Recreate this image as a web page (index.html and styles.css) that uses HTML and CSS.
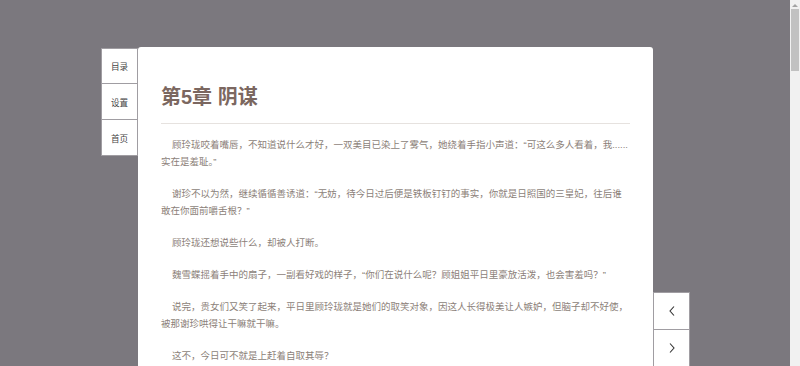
FILE: index.html
```html
<!DOCTYPE html>
<html lang="zh-CN">

<head>
  <meta charset="UTF-8">
  <meta name="viewport" content="width=device-width, initial-scale=1.0">
  <title>第5章 阴谋</title>
  <link rel="stylesheet" href="styles.css">
</head>

<body>
  <div class="reader">
    <nav class="side-menu">
      <a href="#" class="side-menu-item">目录</a>
      <a href="#" class="side-menu-item">设置</a>
      <a href="#" class="side-menu-item">首页</a>
    </nav>
    <article class="chapter">
      <h1 class="chapter-title">第5章 阴谋</h1>
      <div class="chapter-content">
        <p>顾玲珑咬着嘴唇，不知道说什么才好，一双美目已染上了雾气，她绕着手指小声道：“可这么多人看着，我......实在是羞耻。”</p>
        <p>谢珍不以为然，继续循循善诱道：“无妨，待今日过后便是铁板钉钉的事实，你就是日照国的三皇妃，往后谁敢在你面前嚼舌根？”</p>
        <p>顾玲珑还想说些什么，却被人打断。</p>
        <p>魏雪蝶摇着手中的扇子，一副看好戏的样子，“你们在说什么呢？顾姐姐平日里豪放活泼，也会害羞吗？”</p>
        <p>说完，贵女们又笑了起来，平日里顾玲珑就是她们的取笑对象，因这人长得极美让人嫉妒，但脑子却不好使，被那谢珍哄得让干嘛就干嘛。</p>
        <p>这不，今日可不就是上赶着自取其辱？</p>
        <p>亭子里的笑声一阵高过一阵，顾玲珑的脸色也越来越白，她攥紧了衣袖，终究还是没有说出话来。</p>
        <p>谢珍见状，眼底闪过一丝得意，面上却仍是一副温柔体贴的模样，轻轻拍了拍她的手背。</p>
        <p>“玲珑妹妹莫怕，有姐姐在呢，三皇子待会儿便会路过此处，你只管把那香囊递过去便是。”</p>
        <p>顾玲珑低着头，半晌才轻轻“嗯”了一声。</p>
        <p>远处的回廊上，几个人影缓缓走来，为首的男子一袭月白长袍，面如冠玉，正是三皇子。</p>
        <p>贵女们纷纷整理衣裙，一个个端庄娴静，仿佛方才的嬉笑从未发生过。</p>
        <p>谢珍推了推顾玲珑，低声催促道：“快去呀，机会可就这一次。”</p>
        <p>顾玲珑握着香囊的手微微颤抖，她深吸一口气，终于站起身来。</p>
        <p>可就在她迈出第一步的时候，脚下不知被什么绊了一下，整个人便朝着亭外的池塘跌了过去。</p>
        <p>“扑通”一声，水花四溅。</p>
        <p>亭子里顿时乱作一团，有人惊叫，有人掩嘴偷笑，却没有一个人上前去拉她一把。</p>
        <p>冰冷的池水瞬间没过头顶，顾玲珑拼命挣扎，意识却一点一点模糊下去。</p>
        <p>恍惚之间，她似乎看见谢珍站在池边，嘴角噙着一抹冷笑。</p>
        <p>原来，这一切都是早就设计好的。</p>
      </div>
    </article>
  </div>
  <nav class="page-nav">
    <a href="#" class="page-nav-item" title="上一章">
      <svg width="8" height="12" viewBox="0 0 8 12"><path d="M6 1.5L2 6l4 4.5" fill="none" stroke="#333" stroke-width="1.1"/></svg>
    </a>
    <a href="#" class="page-nav-item" title="下一章">
      <svg width="8" height="12" viewBox="0 0 8 12"><path d="M2 1.5L6 6l-4 4.5" fill="none" stroke="#333" stroke-width="1.1"/></svg>
    </a>
  </nav>
  <!-- 仿滚动条 -->
  <div class="scroll-track" aria-hidden="true">
    <div class="scroll-arrow"></div>
    <div class="scroll-thumb"></div>
  </div>
</body>

</html>
```

FILE: styles.css
```css
html {
  box-sizing: border-box;
  font-family: "Liberation Sans", "Noto Sans CJK SC", sans-serif;
  font-size: 9.5px;
}

*,
*::before,
*::after {
  box-sizing: border-box;
}

body {
  margin: 0;
  background-color: #7b787e;
}

a {
  text-decoration: none;
  color: #333;
}

.reader {
  display: flex;
  align-items: flex-start;
  margin: 47px 0 0 101px;
}

.side-menu {
  display: flex;
  flex-direction: column;
  width: 37px;
  padding-top: 1px;
}

.side-menu-item {
  display: flex;
  justify-content: center;
  align-items: center;
  height: 36px;
  background-color: #fff;
  border: 1px solid #a09da2;
  border-top: none;
  font-size: 8.6px;
  color: #444;
}

.side-menu-item:first-child {
  border-top: 1px solid #a09da2;
}

.chapter {
  width: 515px;
  min-height: 1990px;
  background-color: #fff;
  border-radius: 3px;
  padding: 36px 23px 40px;
}

.chapter-title {
  margin: 0;
  padding-bottom: 12px;
  font-size: 20px;
  font-weight: bold;
  line-height: 28px;
  color: #7b6760;
  border-bottom: 1px solid #e6e2df;
}

.chapter-content {
  padding-top: 12px;
}

.chapter-content p {
  margin: 0 0 15px;
  line-height: 17px;
  text-indent: 11px;
  color: #8c7f79;
}

.page-nav {
  position: fixed;
  left: 653px;
  bottom: 0;
  display: flex;
  flex-direction: column;
}

.page-nav-item {
  display: flex;
  justify-content: center;
  align-items: center;
  width: 37px;
  height: 37px;
  background-color: #fff;
  border: 1px solid #a09da2;
  border-bottom: none;
}

.scroll-track {
  position: fixed;
  top: 0;
  right: 0;
  width: 10px;
  height: 100%;
  background-color: #f1f1f1;
  padding: 0 1px;
}

.scroll-arrow {
  width: 0;
  height: 0;
  margin: 4px auto 2px;
  border-left: 3px solid transparent;
  border-right: 3px solid transparent;
  border-bottom: 3px solid #a3a3a3;
}

.scroll-thumb {
  height: 62px;
  background-color: #c1c1c1;
}
```
